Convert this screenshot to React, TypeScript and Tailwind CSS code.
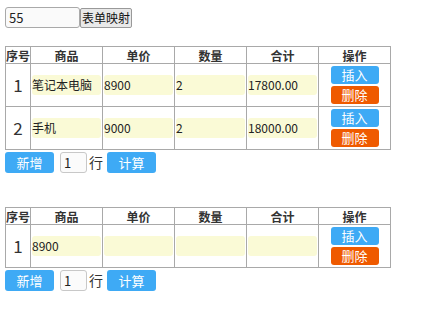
import React from "react"

type Row = { name: string; price: string; qty: string; total: string }

const font = { fontFamily: '"Noto Sans CJK SC", "Noto Sans", sans-serif' }

function Btn({ label, color }: { label: string; color: "blue" | "orange" }) {
    return (
        <button
            className={
                "block w-[48px] h-[18px] rounded-[3px] text-white text-[13px] leading-[18px] mx-auto " +
                (color === "blue" ? "bg-[#3eaaf5]" : "bg-[#ef5a00]")
            }
        >
            {label}
        </button>
    )
}

function Cell({ value }: { value: string }) {
    return (
        <td className="border border-[#a9a9a9] px-px">
            <div className="h-[20px] w-full rounded-[3px] bg-[#fafad6] text-[12px] leading-[20px] text-[#222] whitespace-nowrap overflow-hidden">
                {value}
            </div>
        </td>
    )
}

function GoodsTable({ rows }: { rows: Row[] }) {
    return (
        <div>
            <table className="table-fixed border-collapse w-[385px] text-[#333]">
                <colgroup>
                    <col className="w-[25px]" />
                    <col className="w-[72px]" />
                    <col className="w-[72px]" />
                    <col className="w-[72px]" />
                    <col className="w-[72px]" />
                    <col className="w-[72px]" />
                </colgroup>
                <thead>
                    <tr className="h-[17px] text-[12px] font-bold leading-[15px]">
                        {["序号", "商品", "单价", "数量", "合计", "操作"].map((h) => (
                            <th key={h} className="border border-[#a9a9a9] p-0 whitespace-nowrap">
                                {h}
                            </th>
                        ))}
                    </tr>
                </thead>
                <tbody>
                    {rows.map((r, i) => (
                        <tr key={i} className="h-[43px]">
                            <td className="border border-[#a9a9a9] text-center text-[17px] p-0">{i + 1}</td>
                            <Cell value={r.name} />
                            <Cell value={r.price} />
                            <Cell value={r.qty} />
                            <Cell value={r.total} />
                            <td className="border border-[#a9a9a9] p-0">
                                <div className="flex flex-col gap-[2px] items-center">
                                    <Btn label="插入" color="blue" />
                                    <Btn label="删除" color="orange" />
                                </div>
                            </td>
                        </tr>
                    ))}
                </tbody>
            </table>
            <div className="flex items-center mt-[2px] h-[21px]">
                <button className="w-[49px] h-[21px] rounded-[3px] bg-[#3eaaf5] text-white text-[13px]">新增</button>
                <div className="ml-[6px] w-[27px] h-[21px] rounded-[3px] border border-[#c8c8c8] bg-[#fbfbfb] text-[13px] leading-[19px] pl-[3px] text-[#222]">
                    1
                </div>
                <span className="ml-[2px] text-[14px] text-[#333]">行</span>
                <button className="ml-[4px] w-[49px] h-[21px] rounded-[3px] bg-[#3eaaf5] text-white text-[13px]">计算</button>
            </div>
        </div>
    )
}

export default function App() {
    return (
        <div className="bg-white w-[427px] h-[314px] pl-[5px] pt-[7px]" style={font}>
            <div className="flex items-center h-[21px]">
                <div className="w-[75px] h-[21px] rounded-[3px] border border-[#a9a9a9] bg-[#fafafa] text-[13px] leading-[19px] pl-[3px] text-[#222]">
                    55
                </div>
                <button className="h-[20px] px-px rounded-[2px] border border-[#999] bg-[#e9e9e9] text-[12px] leading-[18px] text-[#111]">
                    表单映射
                </button>
            </div>
            <div className="mt-[18px]">
                <GoodsTable
                    rows={[
                        { name: "笔记本电脑", price: "8900", qty: "2", total: "17800.00" },
                        { name: "手机", price: "9000", qty: "2", total: "18000.00" },
                    ]}
                />
            </div>
            <div className="mt-[34px]">
                <GoodsTable rows={[{ name: "8900", price: "", qty: "", total: "" }]} />
            </div>
        </div>
    )
}
